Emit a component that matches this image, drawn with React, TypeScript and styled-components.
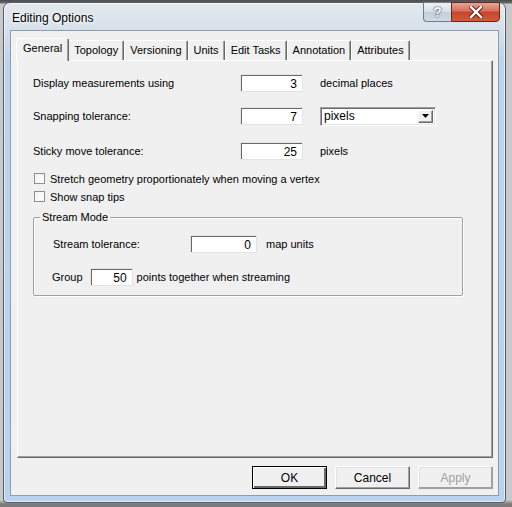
import styled, { createGlobalStyle } from "styled-components";

const GlobalStyle = createGlobalStyle`
  html, body {
    margin: 0;
    padding: 0;
    background: #9a9a9a;
  }
  body {
    font-family: "Liberation Sans", Arial, sans-serif;
    font-size: 11px;
    color: #000;
  }
`;

const tabs = ["General", "Topology", "Versioning", "Units", "Edit Tasks", "Annotation", "Attributes"];

const App = () => {
  return (
    <Desktop>
      <GlobalStyle />
      <Window>
        <TitleBar>
          <Title>Editing Options</Title>
          <Caption>
            <HelpButton>?</HelpButton>
            <CloseButton>
              <svg width="14" height="12" viewBox="0 0 14 12">
                <path d="M2 1 L12 11 M12 1 L2 11" stroke="#5a1a12" strokeWidth="4.2" strokeLinecap="square" />
                <path d="M2 1 L12 11 M12 1 L2 11" stroke="#fff" strokeWidth="2.4" strokeLinecap="square" />
              </svg>
            </CloseButton>
          </Caption>
        </TitleBar>
        <Client>
          <TabStrip>
            {tabs.map((t, i) => (
              <Tab key={t} $active={i === 0}>
                {t}
              </Tab>
            ))}
          </TabStrip>
          <Panel>
            <Row $top={13}>
              <Label>Display measurements using</Label>
              <NumberBox>3</NumberBox>
              <Suffix>decimal places</Suffix>
            </Row>
            <Row $top={15}>
              <Label>Snapping tolerance:</Label>
              <NumberBox>7</NumberBox>
              <Select>
                <span>pixels</span>
                <DropButton>
                  <svg width="7" height="4" viewBox="0 0 7 4">
                    <path d="M0 0 H7 L3.5 4 Z" fill="#000" />
                  </svg>
                </DropButton>
              </Select>
            </Row>
            <Row $top={17}>
              <Label>Sticky move tolerance:</Label>
              <NumberBox>25</NumberBox>
              <Suffix>pixels</Suffix>
            </Row>
            <Check $top={12}>
              <Box />
              Stretch geometry proportionately when moving a vertex
            </Check>
            <Check $top={5}>
              <Box />
              Show snap tips
            </Check>
            <Group>
              <Legend>Stream Mode</Legend>
              <Row $top={11} $indent={19}>
                <GroupLabel>Stream tolerance:</GroupLabel>
                <NumberBox $width={67}>0</NumberBox>
                <Suffix $gap={9}>map units</Suffix>
              </Row>
              <Row $top={15} $indent={18}>
                <span>Group</span>
                <NumberBox $width={43} $gap={7}>50</NumberBox>
                <Suffix $gap={4}>points together when streaming</Suffix>
              </Row>
            </Group>
          </Panel>
          <ButtonBar>
            <PushButton $default>OK</PushButton>
            <PushButton>Cancel</PushButton>
            <PushButton $disabled>Apply</PushButton>
          </ButtonBar>
        </Client>
      </Window>
    </Desktop>
  );
};

export default App;

const Desktop = styled.div`
  width: 512px;
  height: 507px;
  padding: 2px 0 0 3px;
  box-sizing: border-box;
  overflow: hidden;
  background: linear-gradient(180deg, #4a4a4a 0px, #6a6a6a 3px, #c9c9c9 4px, #c9c9c9 500px, #7a7a7a 504px);
`;

const Window = styled.div`
  width: 503px;
  height: 501px;
  box-sizing: border-box;
  border: 1px solid #4f5b68;
  border-radius: 7px 7px 4px 4px;
  background: linear-gradient(180deg, #e4e9ee 0px, #d7e0ea 26px, #bcd3ea 60px, #b9d3ee 100%);
  box-shadow: inset 0 0 0 1px rgba(255, 255, 255, 0.6);
  display: flex;
  flex-direction: column;
  padding: 0 6px 6px 6px;
`;

const TitleBar = styled.div`
  height: 27px;
  display: flex;
  justify-content: space-between;
  align-items: flex-start;
`;

const Title = styled.div`
  font-family: "Liberation Sans", Arial, sans-serif;
  font-size: 12px;
  color: #000;
  padding: 8px 0 0 2px;
  text-shadow: 0 0 6px #fff, 0 0 3px #fff;
`;

const Caption = styled.div`
  display: flex;
  margin-top: -1px;
  margin-right: -1px;
`;

const HelpButton = styled.div`
  width: 27px;
  height: 18px;
  border: 1px solid #6d7b8c;
  border-right: none;
  border-radius: 0 0 0 4px;
  background: linear-gradient(180deg, #eef2f6 0%, #d6dee8 50%, #c3cfdc 51%, #cfdae6 100%);
  color: #fff;
  font-size: 14px;
  font-weight: bold;
  text-align: center;
  line-height: 18px;
  text-shadow: 0 0 2px #38414c, 0 0 1px #38414c;
`;

const CloseButton = styled.div`
  width: 47px;
  height: 18px;
  border: 1px solid #5e2a22;
  border-radius: 0 0 4px 0;
  background: linear-gradient(180deg, #e8a493 0%, #d5705a 45%, #c7452b 50%, #d2593c 100%);
  display: flex;
  align-items: center;
  justify-content: center;
`;

const Client = styled.div`
  flex: 1;
  background: #f0f0f0;
  border: 1px solid #8a9db3;
  display: flex;
  flex-direction: column;
  padding: 5px 5px 0 6px;
`;

const TabStrip = styled.div`
  display: flex;
  align-items: flex-end;
  height: 24px;
  padding-left: 1px;
  position: relative;
  z-index: 1;
`;

const Tab = styled.div<{ $active?: boolean }>`
  height: ${(p) => (p.$active ? 23 : 20)}px;
  box-sizing: border-box;
  padding: ${(p) => (p.$active ? "3px 6px 0 6px" : "3px 5px 0 5px")};
  margin: ${(p) => (p.$active ? "0 -1px -1px -2px" : "0")};
  background: #f0f0f0;
  border-top: 1px solid #fff;
  border-left: 1px solid #fff;
  border-right: 1px solid #696969;
  box-shadow: inset -1px 0 0 #a0a0a0;
  border-radius: 2px 2px 0 0;
  font-size: 11px;
  white-space: nowrap;
  position: relative;
  z-index: ${(p) => (p.$active ? 2 : 1)};
`;

const Panel = styled.div`
  width: 476px;
  height: 398px;
  box-sizing: border-box;
  border-top: 1px solid #fff;
  border-left: 1px solid #fff;
  border-right: 1px solid #696969;
  border-bottom: 1px solid #696969;
  box-shadow: inset -1px -1px 0 #a0a0a0;
  padding: 0 0 0 15px;
  display: flex;
  flex-direction: column;
`;

const Row = styled.div<{ $top: number; $indent?: number }>`
  display: flex;
  align-items: center;
  height: 18px;
  margin-top: ${(p) => p.$top}px;
  padding-left: ${(p) => p.$indent || 0}px;
`;

const Label = styled.span`
  width: 207px;
  flex-shrink: 0;
`;

const GroupLabel = styled.span`
  width: 137px;
  flex-shrink: 0;
`;

const NumberBox = styled.div<{ $width?: number; $gap?: number }>`
  width: ${(p) => p.$width || 63}px;
  height: 18px;
  box-sizing: border-box;
  margin-left: ${(p) => p.$gap || 0}px;
  background: #fff;
  border-top: 1px solid #a0a0a0;
  border-left: 1px solid #a0a0a0;
  border-right: 1px solid #fff;
  border-bottom: 1px solid #fff;
  box-shadow: inset 1px 1px 0 #696969;
  outline: 1px solid #e3e3e3;
  outline-offset: -1px;
  text-align: right;
  padding: 2px 5px 0 0;
  font-size: 12px;
  line-height: 14px;
`;

const Suffix = styled.span<{ $gap?: number }>`
  margin-left: ${(p) => p.$gap ?? 17}px;
  white-space: nowrap;
`;

const Select = styled.div`
  margin-left: 17px;
  width: 116px;
  height: 19px;
  box-sizing: border-box;
  background: #fff;
  border-top: 1px solid #a0a0a0;
  border-left: 1px solid #a0a0a0;
  border-right: 1px solid #fff;
  border-bottom: 1px solid #fff;
  box-shadow: inset 1px 1px 0 #696969, inset -1px -1px 0 #e3e3e3;
  display: flex;
  align-items: center;
  justify-content: space-between;
  padding: 0 2px 0 3px;
  font-size: 12px;
`;

const DropButton = styled.div`
  width: 15px;
  height: 13px;
  box-sizing: border-box;
  background: #f0f0f0;
  border-top: 1px solid #fff;
  border-left: 1px solid #fff;
  border-right: 1px solid #696969;
  border-bottom: 1px solid #696969;
  box-shadow: inset -1px -1px 0 #a0a0a0;
  display: flex;
  align-items: center;
  justify-content: center;
`;

const Check = styled.label<{ $top: number }>`
  display: flex;
  align-items: center;
  gap: 5px;
  height: 13px;
  margin-top: ${(p) => p.$top}px;
  padding-left: 1px;
`;

const Box = styled.span`
  width: 11px;
  height: 11px;
  box-sizing: border-box;
  border: 1px solid #8e8f8f;
  background: linear-gradient(135deg, #f4f4f4, #fff);
`;

const Group = styled.div`
  width: 430px;
  height: 79px;
  box-sizing: border-box;
  margin-top: 14px;
  border: 1px solid #a0a0a0;
  box-shadow: 1px 1px 0 #fff, inset 1px 1px 0 #fff;
  border-radius: 2px;
  display: flex;
  flex-direction: column;
`;

const Legend = styled.span`
  align-self: flex-start;
  margin: -7px 0 0 6px;
  padding: 0 2px;
  height: 13px;
  background: #f0f0f0;
`;

const ButtonBar = styled.div`
  display: flex;
  justify-content: flex-end;
  gap: 8px;
  padding: 8px 0 0 0;
`;

const PushButton = styled.div<{ $default?: boolean; $disabled?: boolean }>`
  width: 75px;
  height: 23px;
  box-sizing: border-box;
  background: #f0f0f0;
  border-top: 1px solid ${(p) => (p.$default ? "#000" : "#fff")};
  border-left: 1px solid ${(p) => (p.$default ? "#000" : "#fff")};
  border-right: 1px solid ${(p) => (p.$disabled ? "#a0a0a0" : "#696969")};
  border-bottom: 1px solid ${(p) => (p.$disabled ? "#a0a0a0" : "#696969")};
  outline: ${(p) => (p.$default ? "1px solid #000" : "none")};
  outline-offset: -1px;
  box-shadow: ${(p) =>
    p.$default
      ? "inset 1px 1px 0 #fff, inset -2px -2px 0 #696969, inset -1px -1px 0 #696969"
      : "inset -1px -1px 0 #a0a0a0, inset 1px 1px 0 #e3e3e3"};
  color: ${(p) => (p.$disabled ? "#a0a0a0" : "#000")};
  display: flex;
  align-items: center;
  justify-content: center;
  font-size: 12px;
`;
